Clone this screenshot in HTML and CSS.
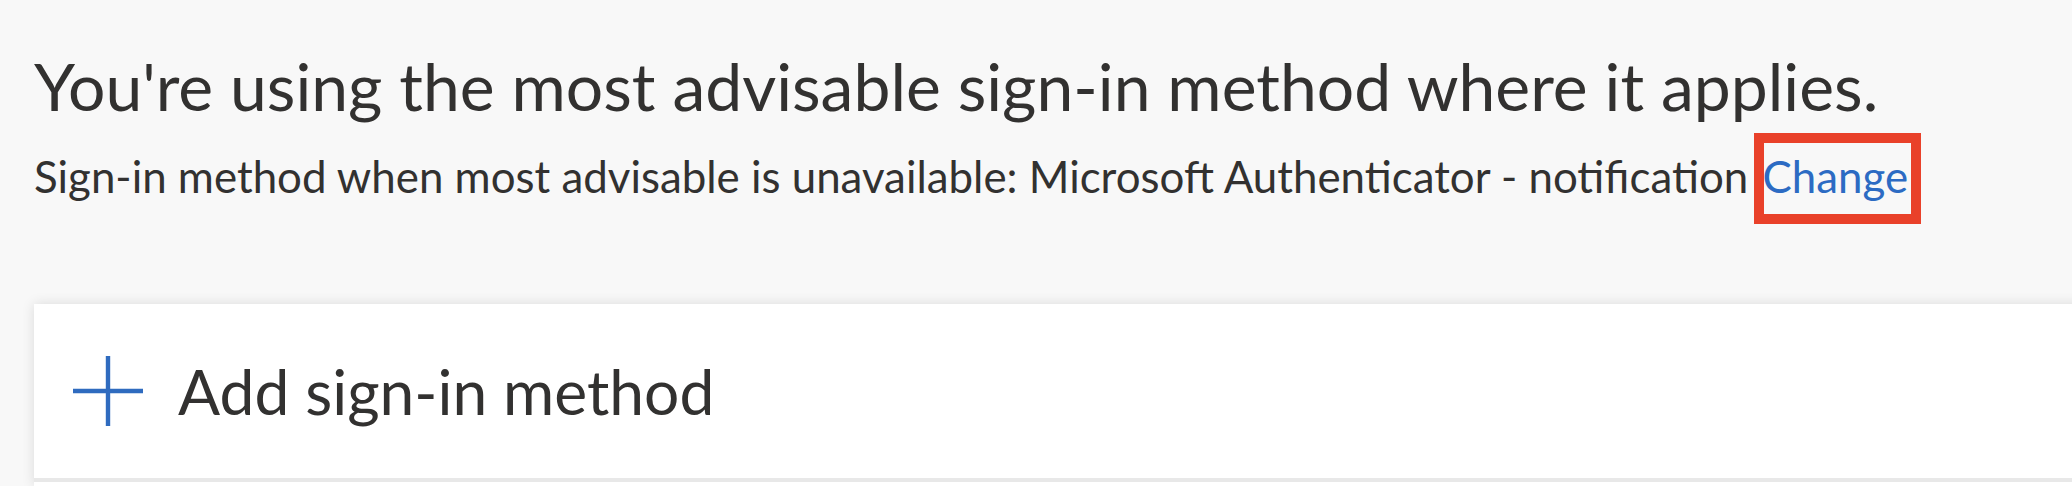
FILE: index.html
```html
<!DOCTYPE html>
<html lang="en">
<head>
<meta charset="utf-8">
<title>Security info</title>
<link rel="stylesheet" href="styles.css">
</head>
<body>
<main class="page">
  <section class="summary">
    <h1 class="summary-title">You're using the most advisable sign-in method where it applies.</h1>
    <p class="summary-default">Sign-in method when most advisable is unavailable: Microsoft Authenticator - notification <a class="change-link" href="#">Change</a></p>
  </section>
  <section class="methods-card">
    <div class="add-row">
      <svg class="add-icon" width="70" height="70" viewBox="0 0 70 70" aria-hidden="true">
        <path d="M0 35H70M35 0V70" stroke="#2f6bbf" stroke-width="4.4" fill="none"/>
      </svg>
      <span class="add-label">Add sign-in method</span>
    </div>
    <div class="method-row"></div>
  </section>
</main>
</body>
</html>
```
FILE: styles.css
```css
html, body {
  margin: 0;
  padding: 0;
  background: #f8f8f8;
  overflow: hidden;
}

.page {
  font-family: "Lato", "Open Sans", sans-serif;
  color: #323130;
  padding: 46px 0 0 34px;
}

.summary-title {
  margin: 0;
  font-size: 66px;
  font-weight: 400;
  line-height: 80px;
  white-space: nowrap;
}

.summary-default {
  margin: 24px 0 0 0;
  font-size: 43.85px;
  line-height: 52px;
  white-space: nowrap;
}

.change-link {
  position: relative;
  color: #2c6bc3;
  text-decoration: none;
  padding-left: 3px;
}

.change-link::after {
  content: "";
  position: absolute;
  left: -5px;
  right: -13px;
  top: -17px;
  bottom: -22px;
  border: 10px solid #e9412a;
}

.methods-card {
  margin-top: 102px;
  margin-right: -40px;
  background: #ffffff;
  box-shadow: 0 0 12px rgba(0, 0, 0, 0.12);
}

.add-row {
  display: flex;
  align-items: center;
  height: 174px;
  padding-left: 39px;
  gap: 35px;
  border-bottom: 4px solid #e8e8e8;
}

.add-icon {
  flex: none;
  display: block;
}

.add-label {
  font-size: 62.3px;
  line-height: 74px;
}

.method-row {
  height: 4px;
}
```
